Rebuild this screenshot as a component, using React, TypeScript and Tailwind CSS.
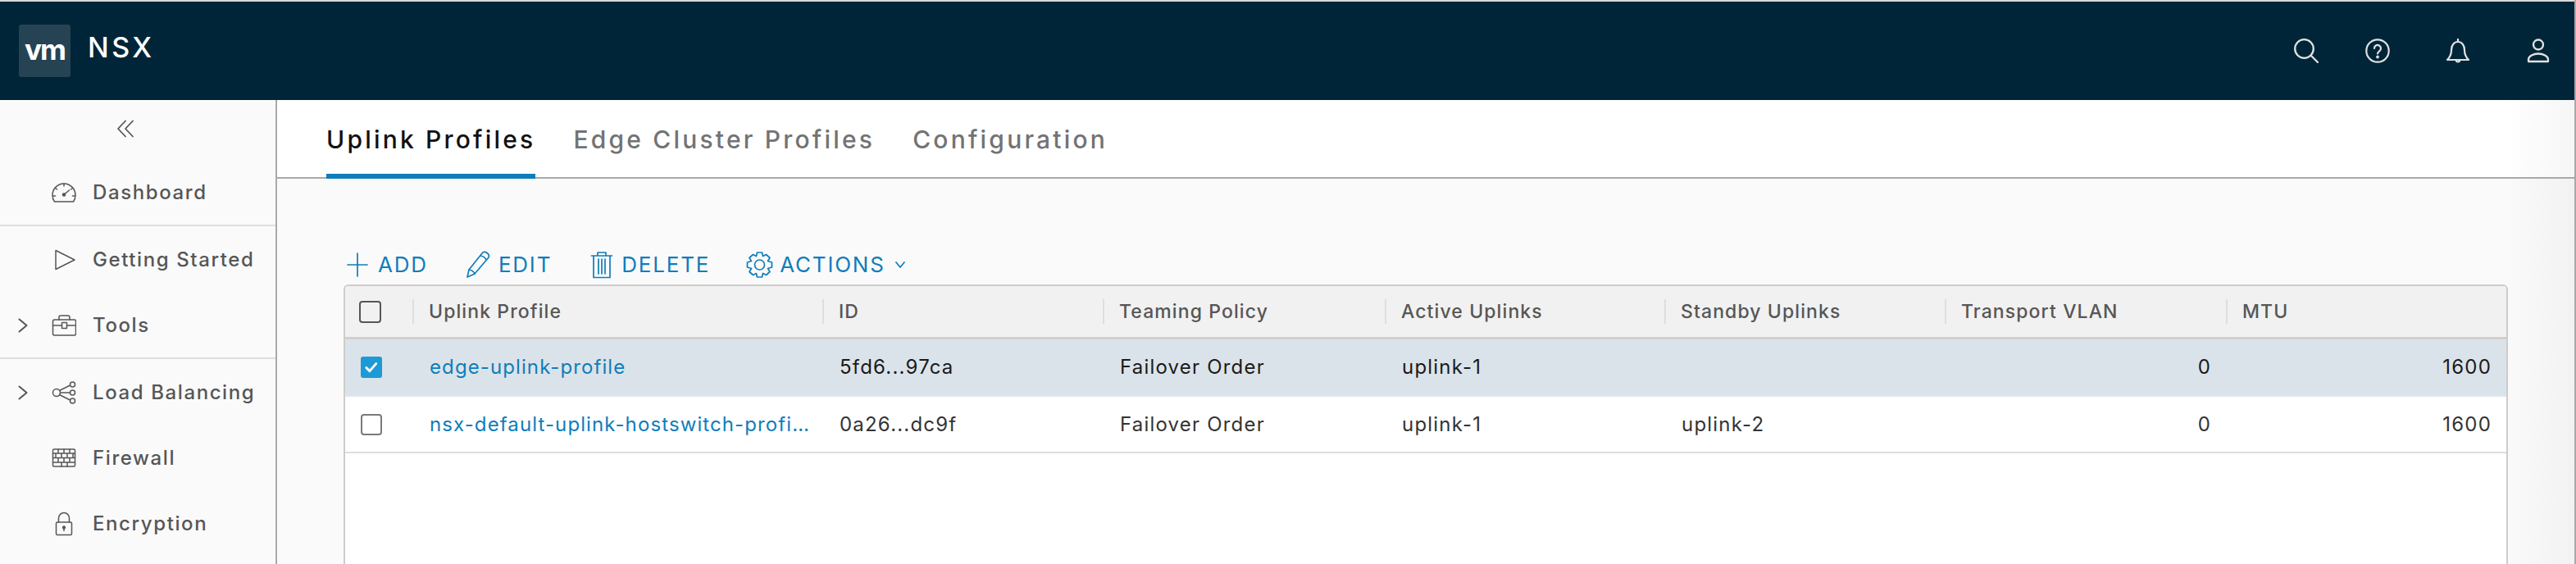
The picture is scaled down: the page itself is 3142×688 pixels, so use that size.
import React from "react";

const F = "font-['Inter','Liberation_Sans',sans-serif]";

const cols = "grid grid-cols-[82px_500px_342px_344px_341px_342px_343px_1fr]";

function NavIcon({ children }: { children: React.ReactNode }) {
  return (
    <svg viewBox="0 0 30 30" width="30" height="30" fill="none" stroke="#565656" strokeWidth="1.5" strokeLinecap="round" strokeLinejoin="round" className="shrink-0">
      {children}
    </svg>
  );
}

const Chevron = () => (
  <svg viewBox="0 0 12 18" width="12" height="18" fill="none" stroke="#565656" strokeWidth="2" strokeLinecap="round" strokeLinejoin="round">
    <path d="M1.500 1.500l9 7.500-9 7.500" />
  </svg>
);

function NavItem({ label, icon, arrow, border, h }: { label: string; icon: React.ReactNode; arrow?: boolean; border?: boolean; h: string }) {
  return (
    <div className={`flex items-center ${h} ${border ? "border-b-2 border-[#dedede]" : ""}`}>
      <div className="w-[63px] pl-[22px] shrink-0 flex items-center">{arrow ? <Chevron /> : null}</div>
      <div className="w-[50px] shrink-0 flex items-center">{icon}</div>
      <span className="text-[24px] font-medium tracking-[1.6px] text-[#565656] whitespace-nowrap">{label}</span>
    </div>
  );
}

const ActIcon = ({ children, w }: { children: React.ReactNode; w: number }) => (
  <svg viewBox={`0 0 ${w} 34`} width={w} height="34" fill="none" stroke="#0f7dbb" strokeWidth="1.7" strokeLinecap="round" strokeLinejoin="round" className="shrink-0">
    {children}
  </svg>
);

function Action({ icon, label, cls }: { icon: React.ReactNode; label: string; cls: string }) {
  return (
    <div className={`flex items-center ${cls} text-[#0f7dbb] text-[26px] tracking-[1.8px] font-normal`}>
      {icon}
      <span>{label}</span>
    </div>
  );
}

function Box({ checked, dark }: { checked?: boolean; dark?: boolean }) {
  if (checked) {
    return (
      <div className="w-[26px] h-[26px] rounded-[3px] bg-[#1b9ad6] flex items-center justify-center">
        <svg viewBox="0 0 16 16" width="18" height="18" fill="none" stroke="#ffffff" strokeWidth="2.6" strokeLinecap="round" strokeLinejoin="round">
          <path d="M2.500 8.500l3.600 3.600 7-8" />
        </svg>
      </div>
    );
  }
  return <div className={`${dark ? "w-[27px] h-[27px] border-[#565656]" : "w-[26px] h-[26px] border-[#7a7a7a]"} rounded-[4px] border-2`} />;
}

const headers = ["Uplink Profile", "ID", "Teaming Policy", "Active Uplinks", "Standby Uplinks", "Transport VLAN", "MTU"];

function Row({ selected, name, id, standby, h }: { selected?: boolean; name: string; id: string; standby: string; h: string }) {
  const text = `text-[24px] tracking-[1.2px] ${selected ? "text-[#1a1a1a]" : "text-[#333333]"} pl-[21px] pr-[18px] whitespace-nowrap overflow-hidden`;
  return (
    <div className={`${cols} items-center ${h} border-b-2 ${selected ? "bg-[#dbe3ea] border-[#e3e6e9]" : "bg-white border-[#dedede]"}`}>
      <div className="pl-[19px]"><Box checked={selected} /></div>
      <div className="pl-[21px] pr-[12px] text-[24px] tracking-[1.1px] text-[#0f7dbb] truncate">{name}</div>
      <div className={text}>{id}</div>
      <div className={text}>Failover Order</div>
      <div className={text}>uplink-1</div>
      <div className={text}>{standby}</div>
      <div className={`${text} text-right`}>0</div>
      <div className={`${text} text-right`}>1600</div>
    </div>
  );
}

export default function App() {
  return (
    <div className={`relative w-[3142px] h-[688px] overflow-hidden flex flex-col bg-[#fafafa] border-r-2 border-[#a9a9a9] ${F}`}>
      <div className="absolute -right-[2px] top-0 w-[2px] h-[33px] bg-[#1c3a58]" />
      <div className="h-[2px] shrink-0 bg-[#d9d9d9]" />
      <header className="h-[120px] shrink-0 bg-[#002538] flex items-center pl-[23px] pr-[29px]">
        <div className="w-[63px] h-[64px] rounded-[3px] bg-[#264354] flex items-center justify-center text-white text-[35px] font-bold tracking-[-2px] pb-[4px]">vm</div>
        <div className="ml-[21px] -mt-[10px] text-white text-[34px] font-medium tracking-[3.5px]">NSX</div>
        <div className="ml-auto flex items-center">
          <svg viewBox="0 0 30 30" width="30" height="30" fill="none" stroke="#e1e1e1" strokeWidth="2.300" strokeLinecap="round" className="mr-[57px]">
            <circle cx="12.500" cy="12.500" r="11.300" />
            <path d="M20.500 20.500l8.500 8.500" />
          </svg>
          <svg viewBox="0 0 30 30" width="30" height="30" fill="none" stroke="#e1e1e1" strokeWidth="2.200" strokeLinecap="round" className="mr-[68px]">
            <circle cx="15" cy="15" r="13.700" />
            <path d="M11 12a4 4 0 1 1 6.200 3.300c-1.400 1-2.200 1.600-2.200 3.200" />
            <circle cx="15" cy="22.500" r="0.800" fill="#e1e1e1" />
          </svg>
          <svg viewBox="0 0 30 30" width="30" height="30" fill="none" stroke="#e1e1e1" strokeWidth="2.200" strokeLinecap="round" strokeLinejoin="round" className="mr-[68px]">
            <path d="M2 26c3-3 5-6 5-12 0-6 3.500-10 8-10s8 4 8 10c0 6 2 9 5 12z" />
            <path d="M15 1v3M13 27.500a2.500 2.500 0 0 0 4 0" />
          </svg>
          <svg viewBox="0 0 30 30" width="30" height="30" fill="none" stroke="#e1e1e1" strokeWidth="2.300" strokeLinejoin="round">
            <circle cx="15" cy="7.500" r="6" />
            <path d="M3 28v-2.500c0-4 6-7 12-7s12 3 12 7V28z" />
          </svg>
        </div>
      </header>
      <div className="flex flex-1 min-h-0">
        <aside className="w-[338px] shrink-0 border-r-2 border-[#a9a9a9] bg-[#fafafa] flex flex-col">
          <div className="h-[72px] shrink-0 flex items-center pl-[142px] pb-[2px]">
            <svg viewBox="0 0 22 22" width="22" height="22" fill="none" stroke="#565656" strokeWidth="1.800" strokeLinecap="round" strokeLinejoin="round">
              <path d="M11 1.500L2 11l9 9.500M20 1.500L11 11l9 9.500" />
            </svg>
          </div>
          <NavItem h="h-[82px] pt-[2px]" border label="Dashboard" icon={
            <NavIcon><path d="M3.500 26h23c1.500-2 2.500-4.500 2.500-8a14 14 0 0 0-28 0c0 3.500 1 6 2.500 8z" /><circle cx="15" cy="17.500" r="1.600" fill="#565656" /><path d="M15.500 17l6-5M15 4v3M4.500 9.500l2 1.500M25.500 9.500l-2 1.500M1.500 19h3M25.500 19h3" /></NavIcon>
          } />
          <NavItem h="h-[82px]" label="Getting Started" icon={
            <NavIcon><path d="M5 3.500v23L28 15z" /></NavIcon>
          } />
          <NavItem h="h-[80px]" arrow border label="Tools" icon={
            <NavIcon><rect x="1.500" y="8" width="28" height="19" rx="2" /><path d="M9 8V5a2 2 0 0 1 2-2h9a2 2 0 0 1 2 2v3M1.500 15h11M18.500 15h11" /><rect x="12.500" y="11.500" width="6" height="7" /></NavIcon>
          } />
          <NavItem h="h-[82px]" arrow label="Load Balancing" icon={
            <NavIcon><circle cx="6" cy="15" r="4.500" /><circle cx="25.500" cy="5" r="3" /><circle cx="25.500" cy="15" r="3" /><circle cx="25.500" cy="25" r="3" /><path d="M9.500 12.500L22.500 6M10.500 15h12M9.500 17.500L22.500 24" /></NavIcon>
          } />
          <NavItem h="h-[78px]" label="Firewall" icon={
            <NavIcon><rect x="1.500" y="4" width="27" height="21" rx="1.500" /><path d="M1.500 9h27M1.500 14.500h27M1.500 20h27M8 4v5M15 4v5M22 4v5M5 9v5.500M12 9v5.500M19 9v5.500M26 9v5.500M8 14.500V20M15 14.500V20M22 14.500V20M12 20v5M19 20v5" /></NavIcon>
          } />
          <NavItem h="h-[82px]" label="Encryption" icon={
            <NavIcon><rect x="5.500" y="13" width="19" height="15.500" rx="1.500" /><path d="M8.500 13V8a6.500 6.500 0 0 1 13 0v5" /><circle cx="15" cy="19.500" r="1.400" fill="#565656" /><path d="M15 20v3.500" /></NavIcon>
          } />
        </aside>
        <main className="flex-1 min-w-0 flex flex-col bg-gradient-to-r from-[#fafafa] from-[97%] to-[#f2f2f2]">
          <nav className="h-[96px] shrink-0 bg-gradient-to-r from-white from-[97%] to-[#f6f6f6] border-b-2 border-[#a9a9a9] flex items-stretch pl-[60px] gap-[46px] text-[30px] font-medium tracking-[3.2px]">
            <div className="h-[96px] flex items-center border-b-[6px] border-[#0f7dbb] pt-[6px] text-[#111111] whitespace-nowrap">Uplink Profiles</div>
            <div className="flex items-center pt-[2px] text-[#737373] whitespace-nowrap">Edge Cluster Profiles</div>
            <div className="flex items-center pt-[2px] text-[#737373] whitespace-nowrap">Configuration</div>
          </nav>
          <div className="pl-[81px] pr-[81px] pt-[82px] flex-1 min-h-0 flex flex-col">
            <div className="h-[47px] shrink-0 flex items-center pl-[4px] pb-[2px]">
              <Action cls="gap-[12px] mr-[46px]" label="ADD" icon={<ActIcon w={26}><path d="M13 3v28M1 17h24" /></ActIcon>} />
              <Action cls="gap-[9px] mr-[47px]" label="EDIT" icon={<ActIcon w={31}><path d="M2 32l2-9L20 3c1.500-2 4-2 6-.500s3 3.500 2 5.500L11 28z" /><path d="M4 23c3 .500 6 2.500 7 5M18 6c3 .500 6 2.500 7 5" /></ActIcon>} />
              <Action cls="gap-[10px] mr-[44px]" label="DELETE" icon={<ActIcon w={28}><path d="M1.500 6h25M9 6V2h10v4M4 6v26.500h20V6M10 10v18M14 10v18M18 10v18" /></ActIcon>} />
              <Action cls="gap-[8px] mr-[12px]" label="ACTIONS" icon={<ActIcon w={33}><circle cx="16.500" cy="17" r="6" /><path d="M13.500 2h6l1 4.500 4-2 4.500 4-2.500 4 5 1.500v6l-5 1.500 2.500 4-4.500 4-4-2-1 4.500h-6l-1-4.500-4 2-4.500-4 2.500-4-5-1.500v-6l5-1.500-2.500-4 4.500-4 4 2z" /></ActIcon>} />
              <svg viewBox="0 0 12 8" width="12" height="8" fill="none" stroke="#0f7dbb" strokeWidth="1.700" strokeLinecap="round" strokeLinejoin="round"><path d="M1 1l5 6 5-6" /></svg>
            </div>
            <div className="flex-1 min-h-0 rounded-t-[6px] border-2 border-b-0 border-[#cccccc] bg-white overflow-hidden">
              <div className={`${cols} h-[65px] items-center bg-[#f1f1f1] border-b-[3px] border-[#cfcfcf]`}>
                <div className="pl-[17px]"><Box dark /></div>
                {headers.map((h) => (
                  <div key={h} className="h-[30px] flex items-center border-l-2 border-[#dedede] pl-[18px] text-[23px] tracking-[1.1px] font-medium text-[#565656] whitespace-nowrap">{h}</div>
                ))}
              </div>
              <Row selected h="h-[70px]" name="edge-uplink-profile" id="5fd6...97ca" standby="" />
              <Row h="h-[69px]" name="nsx-default-uplink-hostswitch-profi…" id="0a26...dc9f" standby="uplink-2" />
            </div>
          </div>
        </main>
      </div>
    </div>
  );
}
